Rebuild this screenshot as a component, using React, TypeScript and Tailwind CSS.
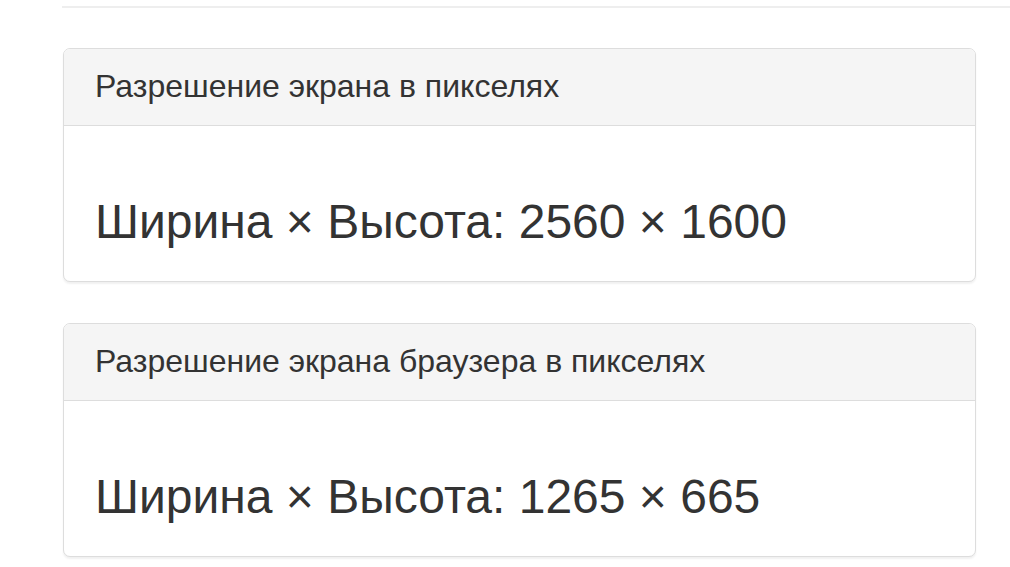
import React from 'react';

const panels = [
  { title: 'Разрешение экрана в пикселях', value: 'Ширина × Высота: 2560 × 1600' },
  { title: 'Разрешение экрана браузера в пикселях', value: 'Ширина × Высота: 1265 × 665' },
];

export default function App() {
  return (
    <div className="min-h-[567px] bg-white text-[#333] font-['Liberation_Sans',Arial,sans-serif] overflow-hidden">
      {/* верхняя разделительная линия */}
      <div className="ml-[62px] mt-[6px] h-[2px] bg-[#eee]" />

      <div className="ml-[63px] mr-[34px] mt-[40px] flex flex-col gap-[41px]">
        {panels.map((p) => (
          <div
            key={p.title}
            className="border border-[#ddd] rounded-[7px] bg-white shadow-[0_2px_2px_rgba(0,0,0,0.06)]"
          >
            <div className="h-[77px] flex items-center px-[31px] bg-[#f5f5f5] border-b border-[#ddd] rounded-t-[6px]">
              <h3 className="text-[32px] leading-[1.1]">{p.title}</h3>
            </div>
            <div className="px-[31px] pt-[70px] pb-[32px]">
              <h3 className="text-[48px] leading-[1.1]">{p.value}</h3>
            </div>
          </div>
        ))}
      </div>
    </div>
  );
}
